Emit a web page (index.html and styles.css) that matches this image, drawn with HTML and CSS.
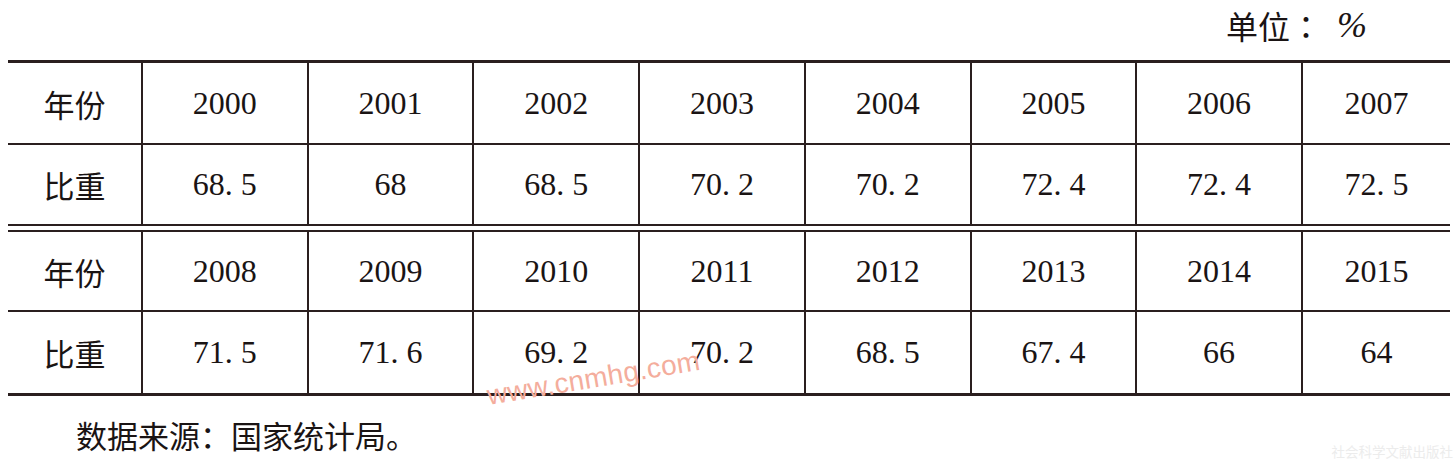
FILE: index.html
```html
<!DOCTYPE html>
<html lang="zh-CN">
<head>
<meta charset="utf-8">
<title>比重</title>
<link rel="stylesheet" href="styles.css">
</head>
<body>
<div class="page">
  <div class="unit"><span class="unit-label">单位</span><span class="colon">：</span><span class="pct">%</span></div>
  <table class="data">
    <colgroup>
      <col class="c-head"><col class="c-num"><col class="c-num"><col class="c-num"><col class="c-num"><col class="c-num"><col class="c-num"><col class="c-num"><col class="c-last">
    </colgroup>
    <tbody>
      <tr class="row r1">
        <th>年份</th><td>2000</td><td>2001</td><td>2002</td><td>2003</td><td>2004</td><td>2005</td><td>2006</td><td>2007</td>
      </tr>
      <tr class="row r2">
        <th>比重</th><td>68. 5</td><td>68</td><td>68. 5</td><td>70. 2</td><td>70. 2</td><td>72. 4</td><td>72. 4</td><td>72. 5</td>
      </tr>
      <tr class="gap"><td colspan="9"></td></tr>
      <tr class="row r3">
        <th>年份</th><td>2008</td><td>2009</td><td>2010</td><td>2011</td><td>2012</td><td>2013</td><td>2014</td><td>2015</td>
      </tr>
      <tr class="row r4">
        <th>比重</th><td>71. 5</td><td>71. 6</td><td>69. 2</td><td>70. 2</td><td>68. 5</td><td>67. 4</td><td>66</td><td>64</td>
      </tr>
    </tbody>
  </table>
  <p class="source">数据来源<span class="colon">：</span>国家统计局。</p>
  <div class="watermark">www.cnmhg.com</div>
  <div class="publisher">社会科学文献出版社</div>
</div>
</body>
</html>
```

FILE: styles.css
```css
html, body {
  margin: 0;
  padding: 0;
  background: #ffffff;
}

.page {
  position: relative;
  width: 1456px;
  height: 460px;
  overflow: hidden;
  color: #1a1414;
  font-family: "Liberation Serif", "Noto Sans CJK SC", serif;
}

.unit {
  height: 60px;
  padding-right: 89px;
  display: flex;
  justify-content: flex-end;
  align-items: flex-start;
  box-sizing: border-box;
  padding-top: 5px;
  font-size: 32px;
  line-height: 40px;
}

.unit-label {
  font-family: "Noto Sans CJK SC", sans-serif;
}

.colon {
  font-family: "Noto Sans CJK JP", "Noto Sans CJK SC", sans-serif;
}

.pct {
  font-family: "Liberation Serif", serif;
  font-style: italic;
  margin-left: 15px;
  font-size: 36px;
}

.data {
  margin-left: 8px;
  width: 1442px;
  table-layout: fixed;
  border-collapse: collapse;
  border-top: 3px solid #2a1f1f;
  border-bottom: 3px solid #2a1f1f;
}

.c-head { width: 134px; }
.c-num { width: 165.7px; }
.c-last { width: 148px; }

.data th,
.data td {
  padding: 0;
  text-align: center;
  vertical-align: middle;
  font-weight: normal;
  font-size: 32px;
  border-left: 2px solid #2a1f1f;
  border-top: 2px solid #2a1f1f;
}

.data th {
  font-family: "Noto Sans CJK SC", sans-serif;
  font-size: 31px;
  border-left: none;
  padding-right: 0;
}

.data td {
  font-family: "Liberation Serif", serif;
}

.r1 th, .r1 td { border-top: none; height: 80px; }
.r2 th, .r2 td { height: 79px; }
.r3 th, .r3 td { height: 78px; }
.r4 th, .r4 td { height: 81px; }

.gap td {
  height: 4px;
  border-left: none;
  border-bottom: 2px solid #2a1f1f;
  font-size: 0;
  line-height: 0;
}

.r3 th, .r3 td { border-top: none; }

.source {
  margin: 0;
  padding-left: 76px;
  padding-top: 19px;
  font-family: "Noto Sans CJK SC", sans-serif;
  font-size: 31px;
  line-height: 40px;
}

.watermark {
  position: absolute;
  left: 490px;
  top: 380px;
  font-family: "Liberation Sans", sans-serif;
  font-size: 28px;
  color: #f4ad9c;
  transform: rotate(-9.5deg);
  transform-origin: left bottom;
  letter-spacing: 0.3px;
}

.publisher {
  position: absolute;
  right: 3px;
  bottom: 1px;
  font-family: "Noto Sans CJK SC", sans-serif;
  font-size: 13.5px;
  line-height: 16px;
  color: #ececec;
}
```
